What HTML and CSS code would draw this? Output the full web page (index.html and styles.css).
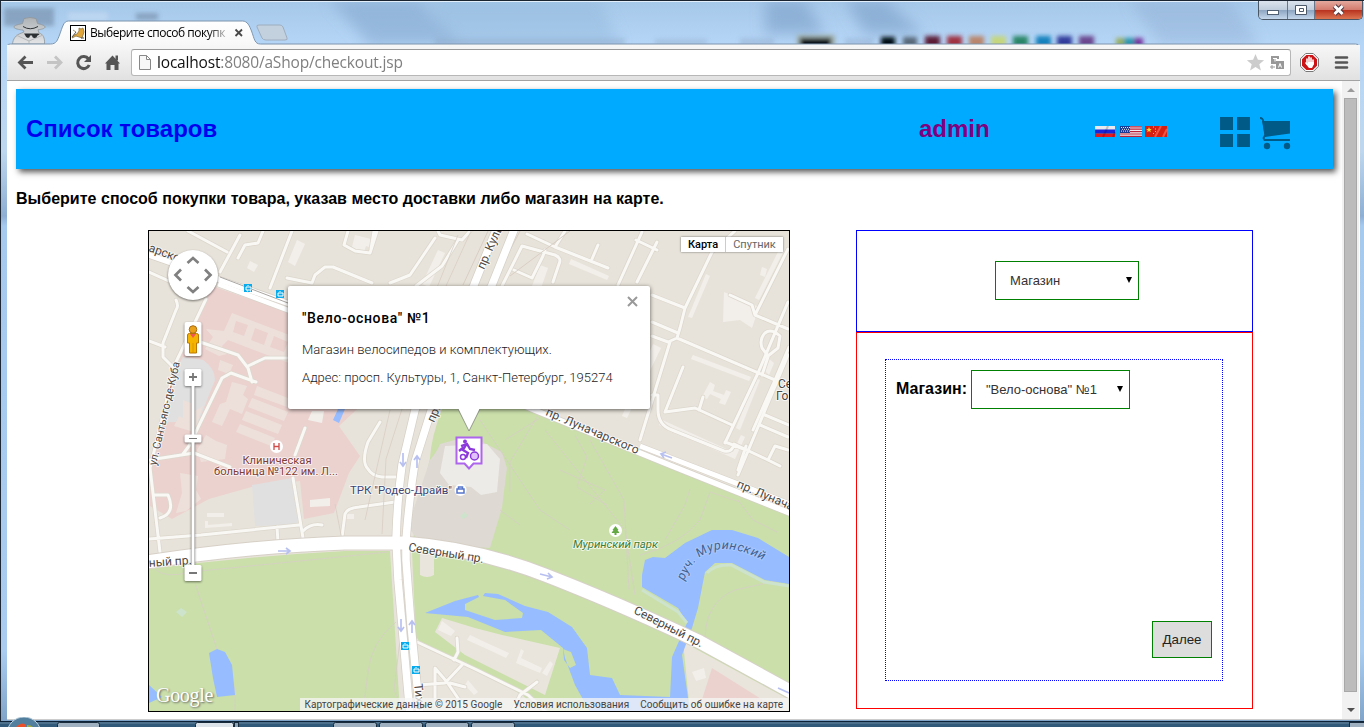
FILE: index.html
```html
<!DOCTYPE html>
<html lang="ru">
<head>
<meta charset="utf-8">
<title>Выберите способ покупки</title>
<link rel="stylesheet" href="styles.css">
</head>
<body>
<div class="desktop">
  <div class="titlebar">
    <svg class="titlebar-art" width="1364" height="46" viewBox="0 0 1364 46">
      <defs>
        <filter id="blur"><feGaussianBlur stdDeviation="2"/></filter>
        <filter id="softblur"><feGaussianBlur stdDeviation="7"/></filter>
        <linearGradient id="tabfill" x1="0" y1="0" x2="0" y2="1"><stop offset="0" stop-color="#fff"/><stop offset="1" stop-color="#f7f7f7"/></linearGradient>
        <linearGradient id="coat" x1="0" y1="0" x2="0" y2="1"><stop offset="0" stop-color="#aeb2b5"/><stop offset="1" stop-color="#e4e5e6"/></linearGradient>
      </defs>
      <g filter="url(#softblur)">
        <path d="M330 0h90l40 45H370z" fill="#83a9cf" opacity=".6"/>
        <path d="M430 0h170l20 45H450z" fill="#8db4d8" opacity=".4"/>
        <path d="M765 0h40l20 34h-60zM845 0h40l40 34h-60z" fill="#7c9fc8" opacity=".6"/>
        <path d="M1130 0h100l30 45h-100z" fill="#8babd0" opacity=".4"/>
      </g>
      <g filter="url(#blur)">
        <path d="M4 8h50v18H4zM136 13h22v7h-22z" fill="#667c98" opacity=".5"/>
        <path d="M68 12h40v9H68z" fill="#d5e4f5" opacity=".4"/>
        <path d="M435 38h190v8H435zM655 39h52v6h-52zM740 38h34v8h-34zM845 38h28v8h-28z" fill="#829cb8" opacity=".3"/>
        <path d="M797 35h38v14h-38z" fill="#9eada9"/><path d="M800 38h31v10h-31z" fill="#060d14"/>
        <path d="M881 37h14v11h-14z" fill="#060d17"/>
        <path d="M903 37h14v11h-14z" fill="#58697a"/>
        <path d="M925 36h15v12h-15z" fill="#5c1e35"/>
        <path d="M947 36h15v12h-15z" fill="#a03243"/>
        <path d="M969 36h15v12h-15z" fill="#b9866d"/>
        <path d="M991 36h15v12h-15z" fill="#c5d67e"/>
        <path d="M1013 36h15v12h-15z" fill="#298667"/>
        <path d="M1036 36h15v12h-15z" fill="#1882bd"/>
        <path d="M1057 36h15v12h-15z" fill="#303d9b"/>
        <path d="M1079 36h15v12h-15z" fill="#6b468f"/>
        <path d="M1116 38h9v10h-9z" fill="#96ae62"/><path d="M1124 38h10v10h-10z" fill="#2598ad"/><path d="M1134 38h9v10h-9z" fill="#76369f"/>
      </g>
      <path d="M0 1.500h1364" stroke="#e3f0fc"/>
      <path d="M12.500 44c.5-5 3-9 9-11l2.500-1-1-2c-4-.3-9-1.300-9-3 0-2 5-2.500 8.500-3.500l1.500-5q6-2 12 0l1.500 5c4 1 7.500 2 7.500 3.500 0 1.700-4 2.400-7 2.800l1 3.200c4 1 6 5 5.500 11z" fill="url(#coat)" stroke="#8f9599" stroke-width=".8"/>
      <path d="M23 26.500q7 4.500 15 0" fill="none" stroke="#303336"/>
      <path d="M16 35l13 6 14-6M29 41v3" fill="none" stroke="#b5b8ba"/>
      <path d="M24 33.500h14.500l1 1-2 1q-1 3-3.500 2.500-2-.5-2-2.500h-2q0 2-2 2.500-2 0-3-3z" fill="#2d3033"/>
      <path d="M7.500 46v-1q1-1 3-1h40c6 0 7-4 9-9 3-8 4-14 9-14h174c5 0 7 5 9 10 3 8 3 13 9 13h1095q3 0 4 2z" fill="url(#tabfill)" stroke="#7c95ae"/>
      <path d="M257 27q-1-2 2-2h21q2 0 3 2l4 11q1 2-2 2h-19q-3 0-4-2z" fill="#c3d1df" stroke="#9eadbc"/>
      <rect x="70.500" y="25.500" width="15" height="15" fill="#fff" stroke="#000"/>
      <path d="M72 38l2-3 3-1 2-3v-3l2 1 2-1 1 4-1 3-1 3-3-1-3-1-2 1zM73 30l3 2" fill="#e0a63c" stroke="#8d7341" stroke-width=".8"/><path d="M72 37l4-5M81 38h3" stroke="#555"/>
      <path d="m235.500 29.500 6.500 6.500m0-6.500-6.500 6.500" stroke="#484848" stroke-width="1.800"/>
    </svg>
    <span class="tab-title">Выберите способ покупк</span>
    <div class="caption">
      <span class="cap"><svg width="28" height="18"><rect x="8.500" y="9.500" width="11" height="4" fill="#fff" stroke="#526074"/></svg></span>
      <span class="cap"><svg width="26" height="18"><path d="M7.500 4.500h11v9h-11zM11.500 7.500h4v3h-4z" fill="#fff" stroke="#4c596b"/></svg></span>
      <span class="cap close"><svg width="47" height="18"><path d="m19.500 5 8 8m0-8-8 8" stroke="#4b3743" stroke-width="5"/><path d="m19.500 5 8 8m0-8-8 8" stroke="#fff" stroke-width="3"/></svg></span>
    </div>
  </div>

  <div class="window">
    <div class="toolbar">
      <svg class="nav-icons" width="124" height="35" viewBox="7 45 124 35">
        <path d="M33 62.500H20M25.500 56.500l-6 6 6 6" fill="none" stroke="#555" stroke-width="2.800"/>
        <path d="M47 62.500h13M55 56.500l6 6-6 6" fill="none" stroke="#c4c4c4" stroke-width="2.800"/>
        <path d="M88.500 59a6 6 0 1 0 .7 6" fill="none" stroke="#555" stroke-width="3"/><path d="M91 55v7h-7z" fill="#555"/>
        <path d="M105 63.500l7.500-8 7.500 8h-1.500v6.500h-4v-5h-4v5h-4v-6.500z" fill="#555"/><path d="M115.500 55.500h2.500v5h-2.500z" fill="#555"/>
      </svg>
      <div class="omnibox">
        <svg width="14" height="18" viewBox="0 0 14 18"><path d="M1.500 1.500h7l4 4v10h-11zM8.500 1.500v4h4" fill="#f7f7f7" stroke="#888"/></svg>
        <span class="url"><b>localhost</b>:8080/aShop/checkout.jsp</span>
        <svg class="omni-icons" width="42" height="20" viewBox="1246 53 42 20">
          <path d="m1255.500 54 2.400 5.800 6.200.4-4.800 4 1.600 6.300-5.400-3.500-5.400 3.500 1.600-6.300-4.800-4 6.200-.4z" fill="#ccc"/>
          <path d="M1271 56h8v3h-3v5h-5z" fill="#989898"/><path d="M1276 61h8v8h-8z" fill="#989898"/><path d="M1273 58.500h4m-2 0v3M1278.500 67.500l1.500-4 1.500 4m-2-1.500h1" fill="none" stroke="#fff"/><path d="M1270 67h5m-3-2v4" stroke="#999"/>
        </svg>
      </div>
      <svg width="60" height="30" viewBox="1297 48 60 30">
        <path d="M1305.700 53.500h7.600l5.200 5.200v7.600l-5.200 5.200h-7.600l-5.200-5.200v-7.600z" fill="#fff" stroke="#777"/>
        <path d="M1306.300 55h6.400l4.300 4.300v6.400l-4.300 4.300h-6.400l-4.300-4.300v-6.400z" fill="#cc1417"/>
        <path d="M1307 64v-5m2 4v-6m2 6v-5m2 6v-4" stroke="#fff" stroke-width="1.600" stroke-linecap="round"/><path d="M1306 62l2 2v-2h6v2l-2 4h-3l-4-5z" fill="#fff"/>
        <path d="M1336 57.500h11M1336 62.500h11M1336 67.500h11" stroke="#555" stroke-width="2.600" stroke-linecap="round"/>
      </svg>
    </div>

    <div class="viewport">
      <main class="page">
        <header class="shop-header">
          <a class="brand">Список товаров</a>
          <a class="user">admin</a>
          <svg class="flags" width="73" height="12" viewBox="1095 126 73 12">
            <path d="M1095 126h20v4h-20z" fill="#e8e9ee"/><path d="M1095 129.500h20v4h-20z" fill="#1724dc"/><path d="M1095 133.500h20v3.500h-20z" fill="#e41a20"/><path d="m1103 137 5-11 M1113 137l2-5" stroke="#000" stroke-width="2" opacity=".18"/>
            <path d="M1120 126h22v11h-22z" fill="#f4eef2"/><path d="M1120 126.800h22m-22 2.400h22m-22 2.400h22m-22 2.400h22m-22 2.300h22" stroke="#b8213a" stroke-width="1.200"/><path d="M1120 126h10v7h-10z" fill="#1c3a94"/><path d="M1121 127.500h9m-8 1.800h8m-9 1.800h9" stroke="#fff" stroke-width=".9" stroke-dasharray="1 1"/>
            <path d="M1145 126h22v11h-22z" fill="#d81f14"/><path d="m1155 137 6-11M1163 137l4-8" stroke="#ff806d" stroke-width="2" opacity=".55"/><path d="M1149 127l.8 2h2l-1.600 1.300.6 2-1.800-1.200-1.800 1.200.6-2-1.600-1.300h2z" fill="#ffdf32"/><path d="M1153 127h1m1 2h1m-1 2.500h1m-3 2h1" stroke="#ffc832"/>
          </svg>
          <svg class="header-icons" width="72" height="33" viewBox="1220 117 72 33" fill="#005a87">
            <path d="M1220 117h13v13h-13zM1237 117h13v13h-13zM1220 134h13v13h-13zM1237 134h13v13h-13z"/>
            <path d="M1262 121h28v12.500l-25 3.500z"/><path d="M1260 118q3 0 3.500 4l1.700 13-1.700 3 1 2h25.500" fill="none" stroke="#005a87" stroke-width="1.800"/>
            <circle cx="1267" cy="146" r="3.200"/><circle cx="1287" cy="146" r="3.200"/>
          </svg>
        </header>
        <h1 class="lead">Выберите способ покупки товара, указав место доставки либо магазин на карте.</h1>

        <div class="columns">
          <section class="map">
            <svg class="map-canvas" width="640" height="480" viewBox="149 231 640 480">
              <defs>
                <path id="minor" d="M188 231l39 21M240 235l-20 37M149 249l62 30M149 272l40 18M206 299l-30 63-26 106 10 84M176 300q3 6 0 10l-13 33v14l12 12M149 341l16 6M200 342l38 13 10 13 4 14M248 366l17-8h28M256 382l-25-9-9 5-33 68-6 8M149 460l45-7 36 14M238 258l7-13 13-2 5-12M292 231l-22 57M287 278l25 5 3-8 10-8h8l39 16M390 283l20-8 25-37M438 231l2 4 22 5 8-9M348 231l-4 14 11 6 15 2 7-22M374 231l-3 18M458 240l-16 26-26 20M522 246l33 9q7 3 4 9l-6 18M522 246l-20 40M514 270l18 8 11-22 2-6M555 247l53 21M527 234l28 13 10-16M598 245l-6 14M642 232l-24 53M657 242l-20 40M636 240l21 10M735 231l-23 21-27 56-5 20-3 10 98 42 14-33M652 295l33 13M652 322l26 11M652 336l16 6 9-4M670 342l-30 98M730 295l22 10 3 10 33 14M788 249l-32 64M788 302l-30 71-33 70M788 355l-50 120M683 367l-18 45 30-4 37 17M703 397l-4 13M652 395h6v15q0 15 14 20l52 21q8 2 10-7l34 16M725 442l24 9M765 415l24 10M760 425l28 12M775 380l-22 50M765 333q-6 6-3 15l6 8 10-8 2-12q-9-8-15-3M768 357l-6 18M768 460l7-14 13 4M768 460l12 6M155 495h13q8 18-8 23M149 539l52-4 98-10M277 527l1 15M293 478l10 60M303 531q8-8 19-6M342 537l3-23q2-6 14-7l36-5M380 422l-12 20q-7 20 0 27 4 7 14 8h15M305 428l-10 27M417 642l58 27 53 26 18 17M537 682l-17 13-8 17M457 638l1 14-4 8M418 685l27-2 17-18M435 705v-37l12 14 19 28M450 683l15 4M738 470l8-24"/>
              </defs>
              <rect x="149" y="231" width="640" height="480" fill="#e8e3da"/>
              <!-- hospital and parking -->
              <path d="M212 286l75 26 80 88-28 26 21 30-11 17-15 40-30 6-4-38-45 5-46 13-37 20-22-13v-42l17-66 20-60z" fill="#ebd2cf"/>
              <path d="M183 357l20 3q12 8 12 20l-18 45q-16-5-37-2l12-46zM252 485l40-7 6 47-43 1z" fill="#e0e0e0"/>
              <!-- parks -->
              <path d="M149 569q100-13 196-18h45l10 161H149z" fill="#cadfaa"/>
              <path d="M442 409h92l255 103v177q-40-20-90-50T545 568L465 548h-54l19-90q1-20 12-49z" fill="#cadfaa"/>
              <path d="M412 551q90 5 150 32t130 60l97 52v17H419z" fill="#cadfaa"/>
              <path d="M430 460q8-10 10-16l22-6 20 4 20 10 5 16-5 40-12 40-70-4-12-18z" fill="#ded9d2"/>
              <path d="M445 446l42-2 13 15-3 33-16 3-10-8-22-2-9-12z" fill="#ecebe7"/>
              <path d="M420 551h14v24q-7 4-14 0zM422 645l53 23 47 27 20 17H419l-2-74zM442 618l33 10 27 7 58 13-15 47-80-40-30-23zM683 642l105 57v13h-98z" fill="#e9e5dc"/>
              <path d="M712 668l70 44h-84z" fill="#ebd2cf"/>
              <!-- hospital buildings -->
              <g fill="#ede0da">
                <path fill-rule="evenodd" d="M232 313l60 23v28l-22-8-42-16-6 6 5 8-8 2-14-7 8-12-7-8 18 2zM236 321l-3 11 11 4 4-11zM255 328l-4 12 13 5 4-12zM274 336l-4 11 14 5 4-10z"/>
                <path d="M232 382l15 4-4 9 5 4-6 15-12-5-8 17-10-4 8-18 6-2zM257 386l36 14-3 8-36-13zM252 398l36 14-4 9-36-14zM246 411l36 14-4 9-36-14zM240 424l35 14-4 8-35-14zM183 400l8 3 4 8 8-5-9 26-20-6 5-10 4 2zM206 435l10 6 11 4-2 14-24 3-4-12zM180 473l18 3-2 14 5 9-15 12-10 2 6-20z"/>
                <path d="M220 360l13 5-4 9-11-4z"/>
              </g>
              <g fill="#f2efea">
                <path d="M355 235l20 5-3 8-6-2-3 8-12-3zM297 240l8 4-10 22-7-4zM438 250l7 3-16 34-7-3zM250 261l8 4-4 7-7-4zM571 259l38 17-2 4-38-16zM540 265l8 3-8 23-8-5zM706 274l4 2-18 42-4-1zM724 292l35 15-7 21-12-8-17 2zM693 355l58 22-2 4-58-22zM710 382l5 3-2 6 11 4 2-5 5 2-6 13-6-2 2-4-11-5-3 5-5-2zM653 344l8 4-34 70-5-2zM660 419l73 33 8-17 4 2-10 22-76-34zM760 380l-20 50-4-2 20-50zM768 358l6 5-5 12-8-8zM780 248l4 2-25 50-4-2zM207 517v-4h17v4zM205 528v-7h3v4l24-2v3zM312 411h12l-2 12-14-3z"/>
                <path d="M470 635l19 9 20 9-3 5-19-9-20-9zM524 651l-3 7 21 10-2 5-24-10 5-14zM442 621l13 10-4 5-13-6zM468 680l10 12-4 3-9-10zM553 664l-6 12-5-3 8-12zM692 672l12-4 2 10-10 3zM760 275l2-8 5 2-2 8zM310 500l20-2v8l-20 1zM346 514h8v5h-8z"/>
              </g>
              <g fill="none" stroke-linejoin="round" stroke-linecap="round"><use href="#minor" stroke="#dcd7cd" stroke-width="4.500"/><use href="#minor" stroke="#f9f8f5" stroke-width="3"/></g>
              <!-- footpaths and rails -->
              <g fill="none" stroke="#d7cec5" stroke-width="1">
                <path d="M155 569q10 10 35 3l100-10 98-10M195 583l22 66q20 20 18 62M396 622q-25 20-28 50l-5 40M400 640l-6 50 10 22M480 420l20 30 40 60 30 20M505 440l35-22M540 412l-30 50 0 30M500 510l20 15M545 430l80 100 10 65M590 440l34 60 5 90M575 435l12 22-10 30 30 18M560 470l45 20-15 14M665 540l20-35 5-16M640 555q40-10 60-35l10-28 30 10M738 500l15 20 24 12M705 640q0-38 30-50l54-12" opacity=".8"/>
                <path d="M436 290l22-55M446 286l25-55M390 410l-25 110M402 409l-16 50-4 75M342 540l-7-36" opacity=".8"/>
                <path d="M500 231l-26 54M520 231l-27 52M488 231l-25 54M570 231l-60 45"/>
              </g>
              <!-- water -->
              <g fill="#97bcff">
                <path d="M645 560l8-3 12 1 20-15 27-13h20l26 8 31 19v27l-24-4-33-17h-17l-10 9-7 36-6 20-10 27 8 57h-25l5-14 2-41 15-34-9-15-36-21v-12z"/>
                <path fill-rule="evenodd" d="M425 613l30-12 23-6 1 2-14 7v6l30 10 27-2 1-5-18-13-22-4 2-3 13 1 27 12 23 6 24 15 15 21 3 27 22 3 8 17 50 2v15h-80l-15-27-10-27-2-10-22-18-36 2-37-15zM563 649l8 3 5 13-6 3-6-8z"/>
                <path d="M209 653l8-4 8 3 7 13 3 30-18 2-4-19zM149 685l13 12-13 6zM338 409h7l-6 14-6-3z"/>
              </g>
              <path d="M642 590l36 22 9 11M707 573q8-9 24-8l33 17 25 4" fill="none" stroke="#cde3cb" stroke-width="3"/>
              <path d="M176 612l5-4 6 4-5 5zM460 516l5-4 3 4-5 3z" fill="#cde3cb"/>
              <!-- major roads -->
              <g fill="none" stroke="#d6d0c7">
                <path d="M140 563q110-17 205-20h58q72 5 142 32t155 67l95 52" stroke-width="15"/>
                <path d="M410 715l-12-135-2-40q1-38 6-75l13-55 59-125 24-60M420 715l-9-90-5-65v-20q3-40 9-78l17-54 60-123 24-60" stroke-width="9"/>
                <path d="M140 252l147 51 245 106 140 57 120 48" stroke-width="7"/><path d="M218 284l75 28M640 446l150 58" stroke-width="6"/>
              </g>
              <g fill="none" stroke="#fff">
                <path d="M140 563q110-17 205-20h58q72 5 142 32t155 67l95 52" stroke-width="13"/>
                <path d="M410 715l-12-135-2-40q1-38 6-75l13-55 59-125 24-60M420 715l-9-90-5-65v-20q3-40 9-78l17-54 60-123 24-60" stroke-width="7.500"/>
                <path d="M140 252l147 51 245 106 140 57 120 48" stroke-width="5.500"/><path d="M218 284l75 28M640 446l150 58" stroke-width="5"/>
              </g>
              <path d="M220 277l68 26" stroke="#aaa5a0"/>
              <g fill="none" stroke="#b8c0f0" stroke-width="1.700">
                <path d="M278 551h12m-4-3 4 3-4 3M540 574l12 3m-4-4 4 4-5 2M401 619v12m-3-4 3 4 3-4M412 633v-12m-3 4 3-4 3 4M403 453v13m-3-4 3 4 3-4M417 468v-12m-3 4 3-4 3 4M672 458l-11-4m3 4-3-4 5-2M778 688l11 5"/>
              </g>
              <g class="map-label">
                <text class="street" transform="translate(148 251) rotate(20)">арско..</text>
                <text class="street" transform="translate(484 270) rotate(-66)">пр. Куль</text>
                <text class="street" transform="translate(434 423) rotate(-66)">пр.</text>
                <text class="street" transform="translate(545 415) rotate(23)" textLength="100">пр. Луначарского</text>
                <text class="street" transform="translate(736 487) rotate(23)">пр. Лунача</text>
                <text class="street small" transform="translate(156 466) rotate(-77)" textLength="106">ул. Сантьяго-де-Куба</text>
                <text class="street" transform="translate(149 567) rotate(-4)">ный пр.</text>
                <text class="street" transform="translate(408 551) rotate(9)" textLength="76">Северный пр.</text>
                <text class="street" transform="translate(633 613) rotate(27)" textLength="76">Северный пр.</text>
                <text class="street" transform="translate(414 684) rotate(84)">Тихо</text>
                <text class="street" x="778" y="388">Се</text><text class="street" x="776" y="400">Го</text>
                <text class="hospital" x="277" y="464" text-anchor="middle">Клиническая</text>
                <text class="hospital" x="276" y="475" text-anchor="middle">больница №122 им. Л...</text>
                <text class="mall" x="350" y="494" textLength="102">ТРК "Родео-Драйв"</text>
                <text class="park" x="573" y="548" textLength="85">Муринский парк</text>
                <path id="river-line" d="M684 581Q704 528 768 563" fill="none"/>
                <text class="river" textLength="96"><textPath href="#river-line">руч. Муринский</textPath></text>
              </g>
              <circle cx="276.500" cy="446.500" r="6.500" fill="#fff"/><path d="M274 443v7m5-7v7m-5-3.500h5" fill="none" stroke="#ce4b49" stroke-width="1.300"/>
              <circle cx="460.500" cy="490" r="6" fill="#fff"/><path d="M457 489h7v4h-7zM458.500 489v-2h4v2" fill="none" stroke="#5575cb" stroke-width="1.500"/>
              <circle cx="615.500" cy="530.500" r="6.500" fill="#fff"/><path d="M615.500 526l3 4h-1l2 3h-3v2h-2v-2h-3l2-3h-1z" fill="#64a943"/>
              <g fill="#08acee">
                <path d="M244 284h8v8h-8zM276 290h8v8h-8zM401 642h8v8h-8zM412 666h8v8h-8z"/>
                <path d="M248 285v1m-2 1h5v3h-5zm1 4h1m2 0h1M280 291v1m-2 1h5v3h-5zM405 643v1m-2 1h5v3h-5zM416 667v1m-2 1h5v3h-5z" fill="none" stroke="#fff"/>
              </g>
              <!-- shop marker -->
              <g><path d="M456.500 437.500h25v26h-8l-4.500 5-4.500-5h-8z" fill="#fff" stroke="#ad65ed" stroke-width="2"/><path d="M461 446l6-2 3 5 5 1M466 445l-3 5 5 3-2 5M459 451l5-4" fill="none" stroke="#8c39dc" stroke-width="2.300"/><circle cx="465" cy="441.500" r="2" fill="#8c39dc"/><circle cx="463" cy="457" r="2.500" fill="none" stroke="#8c39dc" stroke-width="1.500"/><circle cx="474.500" cy="456" r="4" fill="#e1c2fb" stroke="#8c39dc" stroke-width="1.500"/></g>
              <!-- navigation controls -->
              <g class="shadowed"><circle cx="193" cy="275" r="25" fill="#fff"/><rect x="184.500" y="322" width="17" height="34" rx="2" fill="#fff"/><rect x="191.500" y="384" width="3" height="184" fill="#fff" stroke="#bbb" stroke-width=".6"/><rect x="184.500" y="369" width="17" height="17" rx="1.500" fill="#fff"/><rect x="184.500" y="565" width="17" height="16" rx="1.500" fill="#fff"/><rect x="184.500" y="434.500" width="17" height="8" rx="1.500" fill="#fff"/></g>
              <path d="m187.500 263 5.500-5 5.500 5M187.500 287l5.500 5 5.500-5M181 269.500l-5.500 5.500 5.500 5.500M205 269.500l5.500 5.500-5.500 5.500" fill="none" stroke="#808080" stroke-width="2.700"/>
              <path d="M189 377h8m-4-4v8M189 573h8" stroke="#777" stroke-width="1.800"/><path d="M189 438.500h8" stroke="#777"/>
              <path d="M187.500 335q0-1.500 2-1.500h7q2 0 2 1.500v8h-2v10h-7v-10h-2z" fill="#f5b400" stroke="#b97700"/><path d="M193 343v10" stroke="#c98600" stroke-width=".6"/><circle cx="193" cy="329.500" r="3.800" fill="#e9a11c" stroke="#a96b12"/><path d="M190 334h6l-3 4z" fill="#ef5757"/>
            </svg>
            <div class="map-types"><span class="active">Карта</span><span>Спутник</span></div>
            <div class="info">
              <svg class="info-close" width="11" height="11"><path d="m1 1 9 9m0-9-9 9" stroke="#999" stroke-width="2"/></svg>
              <h2>"Вело-основа" №1</h2>
              <p>Магазин велосипедов и комплектующих.</p>
              <p>Адрес: просп. Культуры, 1, Санкт-Петербург, 195274</p>
              <svg class="info-tail" width="26" height="25"><path d="M2 0h22L13 23z" fill="#fff"/><path d="M2 1l11 22L24 1" fill="none" stroke="#777" stroke-opacity=".7"/></svg>
            </div>
            <span class="google">Google</span>
            <div class="credits"><span>Картографические данные © 2015 Google</span><span>Условия использования</span><span>Сообщить об ошибке на карте</span></div>
          </section>

          <aside class="options">
            <div class="method"><div class="select method-select"><span>Магазин</span><i></i></div></div>
            <div class="details">
              <div class="form">
                <div class="field"><label>Магазин:</label><div class="select shop-select"><span>"Вело-основа" №1</span><i></i></div></div>
                <button class="next">Далее</button>
              </div>
            </div>
          </aside>
        </div>
      </main>
      <div class="scrollbar"><i class="up"></i><div class="thumb"></div><i class="down"></i></div>
    </div>
  </div>

  <div class="taskbar">
    <svg width="1364" height="10" viewBox="0 717 1364 10">
      <path d="M0 721h1364v6H0z" fill="#315a7a"/><path d="M0 721.500h1364" stroke="#0d2236"/><path d="M1364 723H0" stroke="#7893a8" stroke-width=".8"/>
      <g fill="#9fb1c0" stroke="#172b3c"><rect x="57.500" y="722.500" width="42" height="8" rx="2"/><rect x="333.500" y="722.500" width="43" height="8" rx="2"/><rect x="379.500" y="722.500" width="43" height="8" rx="2"/><rect x="425.500" y="722.500" width="43" height="8" rx="2"/><rect x="471.500" y="722.500" width="43" height="8" rx="2"/><rect x="1349.500" y="722.500" width="15" height="8"/></g>
      <rect x="195.500" y="722.500" width="38" height="8" rx="2" fill="#dce4e9" stroke="#172b3c"/><rect x="234.500" y="722.500" width="4" height="8" fill="#8ba3b5" stroke="#172b3c"/>
      <circle cx="24" cy="734" r="17" fill="#537f9f" stroke="#c0d3df"/><path d="M16 727q6-6 10-2v2z" fill="#ed5028"/><path d="M27 725q4 0 6 2h-6z" fill="#a2ad42"/>
    </svg>
  </div>
</div>
</body>
</html>
```
FILE: styles.css
```css
* { box-sizing: border-box; }
body { margin: 0; font-family: "Liberation Sans", Arial, sans-serif; color: #000; overflow: hidden; }
svg { display: block; flex: none; }
.desktop { width: 1364px; height: 727px; overflow: hidden; display: flex; flex-direction: column; background: linear-gradient(#a5c7e8, #b6d6f7 44px, #bed7ee 150px, #8eafd3 215px, #a6caee 225px, #a9ccef 650px, #7da1c5); border-left: 1px solid #1c2835; border-top: 1px solid #1a2430; }
.titlebar { height: 44px; flex: none; position: relative; }
.titlebar-art { position: absolute; left: -1px; top: -1px; }
.tab-title { position: absolute; left: 89px; top: 23px; width: 139px; overflow: hidden; white-space: nowrap; font: 12px/17px "Open Sans", "Noto Sans", sans-serif; letter-spacing: -.48px; -webkit-mask-image: linear-gradient(90deg, #000 118px, transparent 142px); mask-image: linear-gradient(90deg, #000 118px, transparent 142px); }
.caption { position: absolute; right: 1px; top: 0; display: flex; height: 19px; border: 1px solid #4b5664; border-top: 0; border-radius: 0 0 5px 5px; overflow: hidden; }
.cap { background: linear-gradient(#dbe4ee, #c0cddc 48%, #8ea6c2 52%, #c4d7ec); border-right: 1px solid #687689; }
.cap.close { border: 0; background: linear-gradient(#e5a99d, #d37b6e 48%, #b93420 52%, #dc7551); }
.window { height: 675px; width: 1353px; margin-left: 6px; display: flex; flex-direction: column; flex: none; position: relative; }
.toolbar { height: 36px; display: flex; align-items: center; background: linear-gradient(#f7f7f7, #e1e1e1); border-bottom: 1px solid #a3a3a3; }
.omnibox { width: 1160px; height: 27px; flex: none; margin-right: 6px; display: flex; align-items: center; padding-left: 6px; border: 1px solid #b7b7b7; border-top-color: #999; border-radius: 3px; background: #fff; }
.url { margin-left: 5px; width: 1089px; flex: none; font: 15.5px/20px "Open Sans", "Noto Sans", sans-serif; letter-spacing: -.18px; color: #808080; white-space: nowrap; padding-bottom: 2px; }
.url b { font-weight: 400; color: #111; }
.viewport { flex: 1; display: flex; background: #fff; border-bottom: 1px solid #ccc; }
.page { width: 1334px; flex: none; padding: 8px 8px 0 9px; }
.shop-header { height: 80px; display: flex; align-items: center; padding-left: 10px; background: #00abff; box-shadow: 3px 3px 6px #555; font: bold 24px/28px "Liberation Sans", Arial, sans-serif; }
.brand { width: 893px; color: #00e; }
.user { width: 176px; color: #800080; }
.flags { margin-top: 5px; margin-right: 52px; }
.header-icons { margin-top: 8px; }
.lead { margin: 20px 0 22px; font-size: 16px; line-height: 19px; letter-spacing: .02px; }
.columns { display: flex; padding-left: 132px; gap: 66px; }
.map { width: 642px; height: 482px; border: 1px solid #000; position: relative; overflow: hidden; font-family: Roboto, sans-serif; }
.map-label { font-family: Roboto, sans-serif; font-size: 11px; stroke: #fff; stroke-width: 2px; stroke-opacity: .7; stroke-linejoin: round; }
.map-label text { paint-order: stroke; }
.map-label path { stroke: none; }
.street { fill: #4d4842; font-size: 12px; }
.street.small { font-size: 11px; }
.hospital { fill: #803e39; font-size: 11.200px; }
.mall { fill: #404675; font-size: 11.5px; }
.park { fill: #3f7e38; font-size: 11.5px; font-style: italic; }
.river { fill: #42618f; stroke: #b1ceff; font-style: italic; font-size: 12.5px; }
.shadowed { filter: drop-shadow(0 1px 1px rgba(0,0,0,.5)); }
.map-types { position: absolute; right: 6px; top: 6px; display: flex; height: 15px; background: #fff; box-shadow: 0 0 2px #666; font-size: 11px; line-height: 15px; color: #666; }
.map-types span { width: 57px; text-align: center; }
.map-types .active { width: 45px; color: #000; font-weight: 500; border-right: 1px solid #ccc; }
.info { position: absolute; left: 139px; top: 55px; width: 362px; height: 123px; padding: 23px 14px; background: #fff; border-radius: 2px; box-shadow: 0 1px 4px rgba(0,0,0,.6); font: 300 13px/18px Roboto, sans-serif; letter-spacing: .02px; white-space: nowrap; color: #222; }
.info h2 { margin: 0 0 14px; font: 500 14px/18px Roboto, sans-serif; letter-spacing: .65px; color: #000; }
.info p { margin: 0 0 10px; }
.info-close { position: absolute; right: 12px; top: 10px; }
.info-tail { position: absolute; left: 168px; top: 122px; }
.google { position: absolute; left: 7px; top: 453px; color: #fff; font: 20px/22px "Liberation Serif", serif; letter-spacing: -.3px; text-shadow: 1px 1px 2px #666; }
.credits { position: absolute; right: 0; bottom: 0; height: 13px; display: flex; gap: 11px; padding: 0 6px 0 5px; background: rgba(245,245,245,.75); font-size: 10px; line-height: 13px; letter-spacing: .05px; color: #444; white-space: nowrap; }
.options { width: 397px; }
.method { height: 102px; border: 1px solid #00f; padding: 30px 0 0 138px; }
.details { height: 377px; border: 1px solid #f00; padding: 26px 28px; }
.select { height: 39px; border: 1px solid #008000; display: flex; align-items: center; justify-content: space-between; padding: 0 5px 0 14px; font-size: 13px; color: #333; white-space: nowrap; }
.select i { border: 4px solid transparent; border-top: 6px solid #000; border-bottom: 0; border-left-width: 3.500px; border-right-width: 3.500px; margin-top: -2px; }
.method-select { width: 144px; padding-right: 6px; }
.shop-select { width: 159px; padding-right: 6px; }
.form { width: 338px; height: 322px; border: 1px dotted #00f; padding: 10px; display: flex; flex-direction: column; justify-content: space-between; }
.field { display: flex; gap: 5px; }
.field label { width: 70px; font: bold 16px/38px "Liberation Sans", Arial, sans-serif; }
.next { align-self: flex-end; width: 60px; height: 37px; margin-bottom: 12px; padding: 0; border: 1px solid #008000; background: #ddd; font: 13.333px "Liberation Sans", Arial, sans-serif; color: #222; }
.scrollbar { width: 17px; margin-left: 1px; background: #f1f1f1; display: flex; flex-direction: column; align-items: center; }
.up { border: 4px solid transparent; border-bottom: 4px solid #9a9a9a; border-top: 0; margin: 7px 0 6px; }
.thumb { width: 13px; height: 594px; background: #bcbcbc; border: 1px solid #a8a8a8; }
.down { border: 4px solid transparent; border-top: 4px solid #505050; border-bottom: 0; margin-top: 16px; }
.taskbar { position: absolute; left: 0; top: 717px; }
```
